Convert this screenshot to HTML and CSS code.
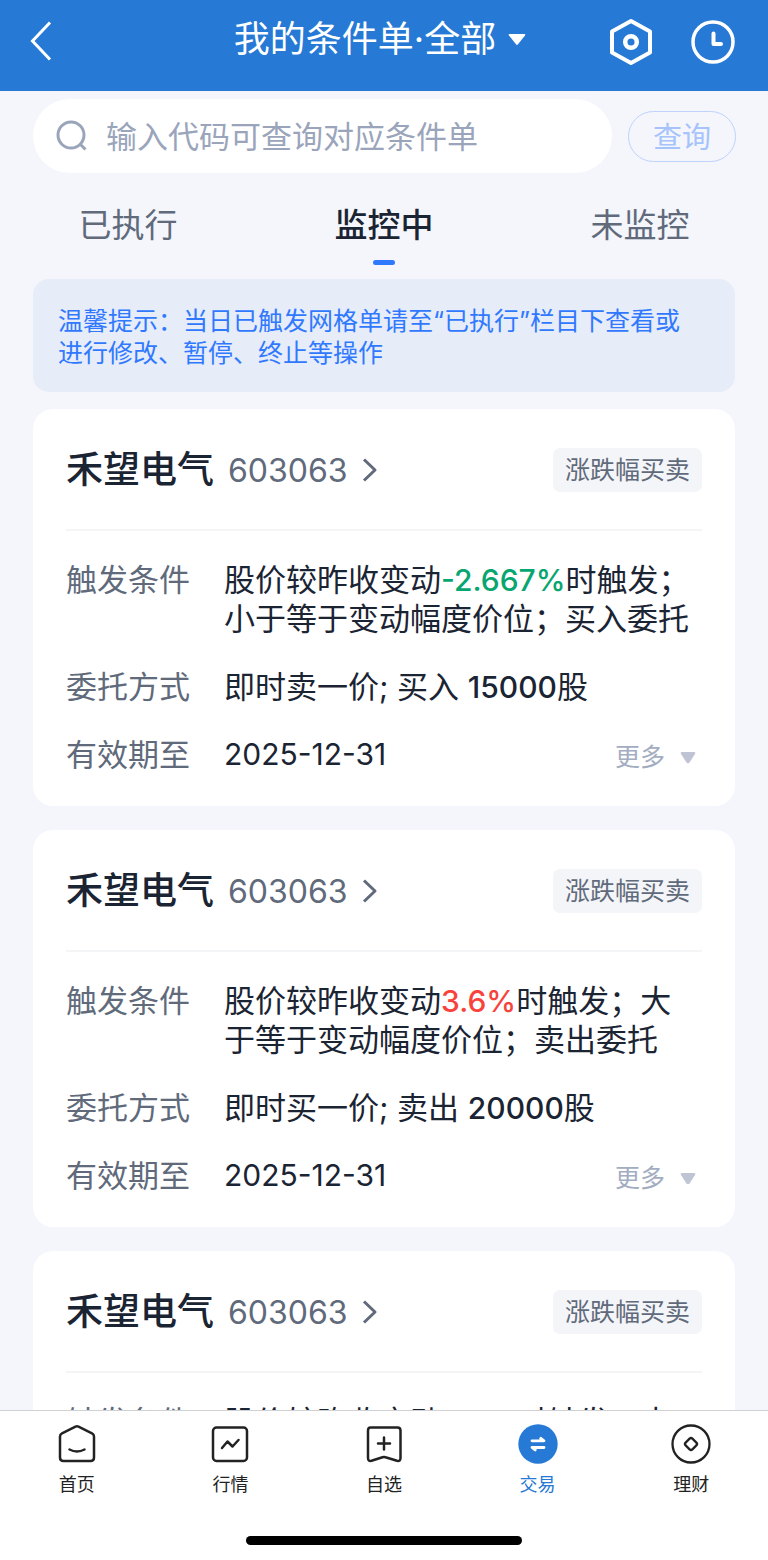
FILE: index.html
```html
<!DOCTYPE html>
<html lang="zh-CN">
<head>
    <meta charset="UTF-8">
    <meta name="viewport" content="width=device-width, initial-scale=1.0">
    <title>我的条件单</title>
    <link rel="stylesheet" href="styles.css">
</head>
<body>
    <header class="topbar">
        <a href="#" class="back" aria-label="返回">
            <svg width="24" height="44" viewBox="0 0 24 44" fill="none" stroke="#fff" stroke-width="3"><path d="M22 2.500L4.500 21L22 39.500"/></svg>
        </a>
        <h1 class="title">
            <button type="button" class="title-btn">我的条件单·全部
                <svg width="18" height="13" viewBox="0 0 18 13"><path d="M1.500 1h15q1.500 0 .5 1.500L10 11.300q-1 1.200-2 0L1 2.500Q0 1 1.500 1z" fill="#fff"/></svg>
            </button>
        </h1>
        <div class="actions">
            <button type="button" class="icon-btn" aria-label="设置">
                <svg width="44" height="48" viewBox="0 0 44 48" fill="none" stroke="#fff" stroke-width="4" stroke-linejoin="round"><path d="M22 3L41 13.500V34.500L22 45L3 34.500V13.500z"/><circle cx="22" cy="24" r="5.800" stroke-width="4.500"/></svg>
            </button>
            <button type="button" class="icon-btn" aria-label="历史">
                <svg width="44" height="44" viewBox="0 0 44 44" fill="none" stroke="#fff" stroke-width="3.500"><circle cx="22" cy="22" r="20"/><path d="M22.500 13.500V24H30" stroke-width="4" stroke-linecap="round" stroke-linejoin="round"/></svg>
            </button>
        </div>
    </header>

    <main class="content">
        <form class="search">
            <label class="search-box">
                <svg width="32" height="32" viewBox="0 0 32 32" fill="none" stroke="#9aa5bb" stroke-width="3"><circle cx="15" cy="15" r="13"/><path d="M24 24L29.500 29.500"/></svg>
                <input type="text" placeholder="输入代码可查询对应条件单" aria-label="输入代码可查询对应条件单">
            </label>
            <button type="submit" class="search-btn">查询</button>
        </form>

        <nav class="tabs">
            <a href="#" class="tab">已执行</a>
            <a href="#" class="tab active">监控中</a>
            <a href="#" class="tab">未监控</a>
        </nav>

        <p class="notice">温馨提示：当日已触发网格单请至“已执行”栏目下查看或进行修改、暂停、终止等操作</p>

        <article class="card">
            <div class="card-head">
                <a href="#" class="stock">
                    <h2 class="name">禾望电气</h2>
                    <span class="code">603063</span>
                    <svg width="16" height="24" viewBox="0 0 16 24" fill="none" stroke="#606a7b" stroke-width="3" stroke-linejoin="round"><path d="M2 1.500L13 12L2 22.500"/></svg>
                </a>
                <span class="tag">涨跌幅买卖</span>
            </div>
            <dl class="info">
                <dt>触发条件</dt>
                <dd>股价较昨收变动<span class="num down">-2.667%</span>时触发；小于等于变动幅度价位；买入委托</dd>
                <dt>委托方式</dt>
                <dd>即时卖一价; 买入 <span class="num qty">15000</span>股</dd>
                <dt>有效期至</dt>
                <dd class="last"><span class="num date">2025-12-31</span>
                    <button type="button" class="more">更多
                        <svg width="16" height="13" viewBox="0 0 16 13"><path d="M2 1h12q2 0 1 2L9.500 11.500q-1.500 1.500-3 0L1 3Q0 1 2 1z" fill="#bec4d3"/></svg>
                    </button>
                </dd>
            </dl>
        </article>

        <article class="card">
            <div class="card-head">
                <a href="#" class="stock">
                    <h2 class="name">禾望电气</h2>
                    <span class="code">603063</span>
                    <svg width="16" height="24" viewBox="0 0 16 24" fill="none" stroke="#606a7b" stroke-width="3" stroke-linejoin="round"><path d="M2 1.500L13 12L2 22.500"/></svg>
                </a>
                <span class="tag">涨跌幅买卖</span>
            </div>
            <dl class="info">
                <dt>触发条件</dt>
                <dd>股价较昨收变动<span class="num up">3.6%</span>时触发；大于等于变动幅度价位；卖出委托</dd>
                <dt>委托方式</dt>
                <dd>即时买一价; 卖出 <span class="num qty">20000</span>股</dd>
                <dt>有效期至</dt>
                <dd class="last"><span class="num date">2025-12-31</span>
                    <button type="button" class="more">更多
                        <svg width="16" height="13" viewBox="0 0 16 13"><path d="M2 1h12q2 0 1 2L9.500 11.500q-1.500 1.500-3 0L1 3Q0 1 2 1z" fill="#bec4d3"/></svg>
                    </button>
                </dd>
            </dl>
        </article>

        <article class="card">
            <div class="card-head">
                <a href="#" class="stock">
                    <h2 class="name">禾望电气</h2>
                    <span class="code">603063</span>
                    <svg width="16" height="24" viewBox="0 0 16 24" fill="none" stroke="#606a7b" stroke-width="3" stroke-linejoin="round"><path d="M2 1.500L13 12L2 22.500"/></svg>
                </a>
                <span class="tag">涨跌幅买卖</span>
            </div>
            <dl class="info">
                <dt>触发条件</dt>
                <dd>股价较昨收变动<span class="num up">3.6%</span>时触发；大</dd>
            </dl>
        </article>
    </main>

    <footer class="bottom">
        <nav class="menu">
            <a href="#" class="menu-item">
                <svg width="40" height="40" viewBox="0 0 40 40" fill="none" stroke="#222" stroke-width="2.500" stroke-linecap="round" stroke-linejoin="round"><path d="M18.500 2.700Q20 2 21.500 2.700L35 9.300Q37 10.300 37 12.500V33.500Q37 37 33.500 37H6.500Q3 37 3 33.500V12.500Q3 10.300 5 9.300z"/><path d="M12.500 25.500Q20 29.500 27.500 25.500"/></svg>
                首页
            </a>
            <a href="#" class="menu-item">
                <svg width="40" height="40" viewBox="0 0 40 40" fill="none" stroke="#222" stroke-width="2.500" stroke-linecap="round" stroke-linejoin="round"><rect x="3" y="3.500" width="34" height="33.500" rx="3.500"/><path d="M12 24L17.500 17.500L22.500 22.500L28.500 16"/></svg>
                行情
            </a>
            <a href="#" class="menu-item">
                <svg width="40" height="40" viewBox="0 0 40 40" fill="none" stroke="#222" stroke-width="2.500" stroke-linecap="round" stroke-linejoin="round"><path d="M6.500 3.500H33.500Q36.500 3.500 36.500 6.500V34Q36.500 37.500 33 36.800L21.500 33.300Q20 32.800 18.500 33.300L7.500 36.800Q4 37.500 4 34V6.500Q4 3.500 6.500 3.500z"/><path d="M14 19.500H26M20 13.500V25.500"/></svg>
                自选
            </a>
            <a href="#" class="menu-item current">
                <svg width="40" height="40" viewBox="0 0 40 40"><circle cx="20" cy="20" r="19.700" fill="#2679d4"/><path d="M14 16.800H26L22.800 14.300V16.800M26 23.500H14L17.200 26V23.500" fill="none" stroke="#fff" stroke-width="2.800" stroke-linecap="round" stroke-linejoin="round"/></svg>
                交易
            </a>
            <a href="#" class="menu-item">
                <svg width="40" height="40" viewBox="0 0 40 40" fill="none" stroke="#222" stroke-width="2.300"><circle cx="20" cy="20" r="18.500"/><rect x="15.200" y="15.200" width="9.600" height="9.600" rx="2" transform="rotate(45 20 20)"/></svg>
                理财
            </a>
        </nav>
        <div class="home-bar"></div>
    </footer>
</body>
</html>
```

FILE: styles.css
```css
* { box-sizing: border-box; }
body { margin: 0; height: 100vh; display: flex; flex-direction: column; background: #f4f6fb; color: #1b2433; font-family: Inter, "Noto Sans CJK SC", sans-serif; }
h1, h2, p, dl, dd { margin: 0; }
h1, h2 { font-weight: 400; }
a { color: inherit; text-decoration: none; }
button { padding: 0; border: none; background: none; color: inherit; font: inherit; cursor: pointer; }
svg { display: block; flex: none; }

/* header */
.topbar { display: grid; grid-template-columns: 1fr auto 1fr; align-items: center; flex: none; height: 91px; padding: 0 33px 7px 28px; background: #2679d4; color: #fff; }
.title { font-size: 36px; line-height: 50px; padding: 0 3px 6px 0; }
.title-btn { display: flex; align-items: center; gap: 12px; }
.actions { display: flex; justify-content: flex-end; align-items: center; gap: 38px; }

.content { flex: 1; min-height: 0; overflow-y: auto; scrollbar-width: none; }

/* search */
.search { display: flex; align-items: center; gap: 16px; padding: 8px 33px 0; }
.search-box { flex: 1; display: flex; align-items: center; gap: 18px; height: 74px; padding: 0 23px; border-radius: 37px; background: #fff; }
.search-box input { flex: 1; min-width: 0; padding: 0; border: none; outline: none; background: none; font: inherit; font-size: 31px; color: #1b2433; }
.search-box input::placeholder { color: #9aa5bb; opacity: 1; }
.search-btn { flex: none; width: 108px; height: 51px; padding-top: 3px; border: 1px solid #bed2fb; border-radius: 26px; color: #a6c3fc; font-size: 29px; line-height: 44px; }

/* tabs */
.tabs { display: grid; grid-template-columns: repeat(3, 1fr); padding: 30px 0 14px; }
.tab { display: flex; flex-direction: column; align-items: center; gap: 13px; color: #606a7b; font-size: 33px; line-height: 44px; }
.tab::after { content: ""; width: 22px; height: 5px; border-radius: 3px; }
.tab.active { color: #1b2433; font-weight: 500; }
.tab.active::after { background: #3079ff; }

.notice { margin: 0 33px 17px; padding: 26px 40px 23px 25px; border-radius: 16px; background: #e6ecf8; color: #3079ff; font-size: 25px; line-height: 32px; }

/* order card */
.card { margin: 0 33px 24px; padding: 39px 33px 32px; border-radius: 20px; background: #fff; }
.card-head { display: flex; justify-content: space-between; align-items: center; padding-bottom: 37px; border-bottom: 2px solid #f4f5f7; }
.stock { display: flex; align-items: center; height: 44px; }
.name { font-size: 37px; line-height: 44px; font-weight: 500; }
.code { margin: 0 14px; color: #606a7b; font-size: 32px; }
.tag { padding: 0 12px; border-radius: 7px; background: #f4f5f8; color: #606a7b; font-size: 25px; line-height: 44px; }
.info { display: grid; grid-template-columns: 158px 1fr; row-gap: 29px; padding-top: 29px; font-size: 31px; line-height: 39px; }
.info dt { color: #606a7b; }
.info dd { padding-right: 8px; }
.num { font-size: 30px; line-height: 30px; }
.date { line-height: 39px; }
.down { color: #07a671; font-weight: 500; }
.up { color: #f8433c; font-weight: 500; }
.qty { font-weight: 500; }
.info .last { display: flex; justify-content: space-between; padding-right: 6px; }
.more { display: flex; align-items: center; gap: 15px; padding-top: 6px; color: #a3adc2; font-size: 25px; line-height: 33px; }

/* bottom menu */
.bottom { flex: none; padding: 13px 0 15px; border-top: 1px solid #d0d1d4; background: #fff; }
.menu { display: grid; grid-template-columns: repeat(5, 1fr); }
.menu-item { display: flex; flex-direction: column; align-items: center; gap: 9px; color: #222; font-size: 18px; line-height: 24px; }
.menu-item.current { color: #2679d4; }
.home-bar { width: 36%; height: 9px; margin: 39px auto 0; border-radius: 5px; background: #000; }
```
